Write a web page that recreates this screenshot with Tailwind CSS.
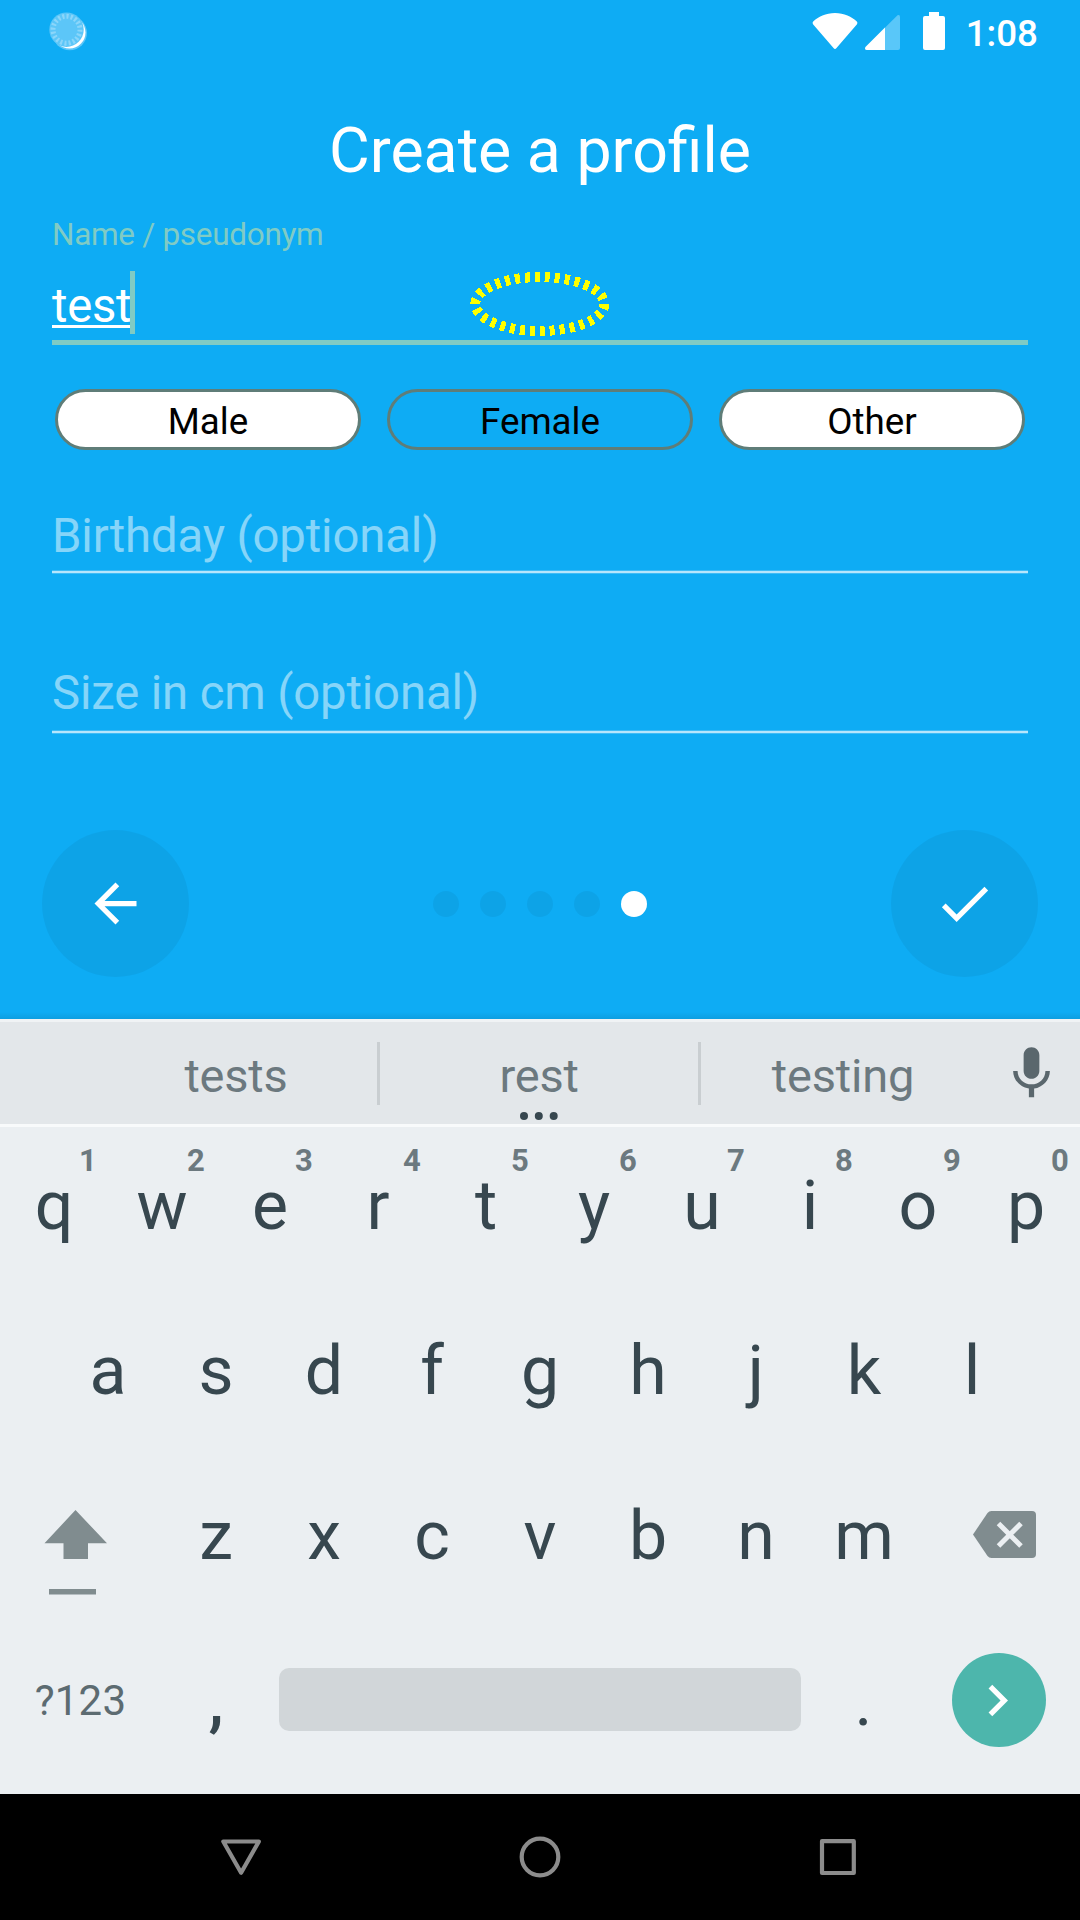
<!DOCTYPE html>
<html lang="en">
<head>
<meta charset="utf-8">
<title>Create a profile</title>
<script src="https://cdn.jsdelivr.net/npm/@tailwindcss/browser@4"></script>
</head>
<body class="w-[1080px] h-[1920px] overflow-hidden bg-[#0eacf4] font-[Roboto,sans-serif] flex flex-col">

<!-- status bar -->
<header class="h-[63px] shrink-0 flex items-start justify-between pl-[48px] pr-[42px] pt-[11px] text-white">
  <svg class="w-10 h-10" viewBox="0 0 40 40">
    <circle cx="21.700" cy="22" r="17.300" fill="#5cc6f8"/>
    <circle cx="21.500" cy="21.500" r="16" fill="#fff"/>
    <circle cx="18.500" cy="18.700" r="17.200" fill="#5cc6f8"/>
    <circle cx="18.500" cy="18.700" r="13.500" fill="none" stroke="#8bd6fa" stroke-width="5" stroke-dasharray="2 2" pathLength="80"/>
  </svg>
  <div class="flex">
    <svg class="w-[160px] h-10" viewBox="810 11 160 40" fill="#fff">
      <path d="M813.2 21.500C818 17 826 13 835 13s17 4 21.800 8.500q1.200 1.200.2 2.800L836.500 48q-1.500 1.800-3 0L813 24.300q-1-1.600.2-2.800z"/>
      <path d="M897.500 15.300q2.500-1 2.500 1.700v31q0 2-2 2H867q-3-.5-1.500-3z" fill="#59c7f9"/>
      <path d="M885 27.500V50H867q-3-.5-1.500-3z"/>
      <path d="M929 12h10v4h4q2 0 2 2v30q0 2-2 2h-18q-2 0-2-2V18q0-2 2-2h4z"/>
    </svg>
    <div class="-ml-1 mt-px text-[36.750px] leading-[43px] font-medium">1:08</div>
  </div>
</header>

<main class="h-[956px] shrink-0 px-[52px] flex flex-col">
  <h1 class="mt-[50px] text-[62.600px] leading-[75px] text-white text-center">Create a profile</h1>
  <label class="mt-[29px] text-[31.500px] leading-[36px] tracking-[-0.3px] text-[#80cbc4]">Name / pseudonym</label>
  <div class="relative -mt-px h-[93px] pt-[21px] flex items-start border-b-[5px] border-[#80cbc4] text-[47.250px] leading-[66px] text-white">
    <span class="tracking-[-0.3px] underline decoration-[3px] underline-offset-[3px] [text-decoration-skip-ink:none]">test</span>
    <span class="w-[5px] h-[63px] -mt-[2px] -ml-[1px] bg-[#80cbc4]"></span>
    <!-- touch indicator -->
    <svg class="absolute left-[416px] top-[18px] w-[144px] h-[68px]" viewBox="0 0 144 68"><ellipse cx="71.800" cy="34" rx="64.500" ry="27" fill="none" stroke="#ff0" stroke-width="10" stroke-dasharray="5 5" pathLength="300" shape-rendering="crispEdges"/></svg>
  </div>
  <div class="mt-[44px] mx-[3px] grid grid-cols-3 gap-[26px] text-center text-[36.750px] text-black">
    <button class="h-[61px] rounded-full border-[3px] border-[#5f7d78] bg-white"><span class="block leading-[59px]">Male</span></button>
    <button class="h-[61px] rounded-full border-[3px] border-[#5f7d78]"><span class="block leading-[59px]">Female</span></button>
    <button class="h-[61px] rounded-full border-[3px] border-[#5f7d78] bg-white"><span class="block leading-[59px]">Other</span></button>
  </div>
  <div class="h-[124px] pt-[56px] flex flex-col justify-between text-[47.250px] leading-[61px] tracking-[-0.13px] text-white/50">
    <span>Birthday (optional)</span>
    <span class="h-1 border-y border-white/20 bg-[#b7e6fc] bg-clip-padding"></span>
  </div>
  <div class="h-[160px] pt-[89px] flex flex-col justify-between text-[47.250px] leading-[61px] tracking-[-0.13px] text-white/50">
    <span>Size in cm (optional)</span>
    <span class="h-1 border-y border-white/20 bg-[#b7e6fc] bg-clip-padding"></span>
  </div>
  <nav class="mt-[96px] -mx-[10px] flex items-center justify-between">
    <button class="size-[147px] rounded-full bg-black/5 flex items-center justify-center">
      <svg class="size-[63px]" viewBox="0 0 24 24" fill="#fff"><path d="M20 11H7.830l5.590-5.590L12 4l-8 8 8 8 1.410-1.410L7.830 13H20v-2z"/></svg>
    </button>
    <div class="flex gap-[21px] pt-px">
      <i class="size-[26px] rounded-full bg-black/5"></i>
      <i class="size-[26px] rounded-full bg-black/5"></i>
      <i class="size-[26px] rounded-full bg-black/5"></i>
      <i class="size-[26px] rounded-full bg-black/5"></i>
      <i class="size-[26px] rounded-full bg-white"></i>
    </div>
    <button class="size-[147px] rounded-full bg-black/5 flex items-center justify-center">
      <svg class="size-[63px]" viewBox="0 0 24 24" fill="#fff"><path d="M9 16.200L4.800 12l-1.400 1.400L9 19 21 7l-1.400-1.400z"/></svg>
    </button>
  </nav>
  <div class="mt-auto -mx-[52px] h-[7px] bg-linear-to-b from-transparent to-black/8"></div>
</main>

<!-- keyboard -->
<section class="h-[775px] shrink-0 bg-[#ebeff2] text-[#37474f]">
  <div class="h-[108px] border-t-[3px] border-b-[3px] border-t-[#f0f3f5] border-b-[#f8fafb] bg-[#e3e7ea] flex text-[47px] tracking-[-0.2px] text-[#6c797f] text-center">
    <div class="w-[94px]"></div>
    <div class="w-[284px] leading-[108px]">tests</div>
    <div class="w-[3px] h-[63px] mt-5 -ml-px bg-[#c9ced1]"></div>
    <div class="relative w-[318px] leading-[108px]">rest
      <svg class="absolute left-[139px] top-[90px] w-10 h-2" viewBox="0 0 40 8" fill="#37474f"><circle cx="5" cy="4" r="4"/><circle cx="19.800" cy="4" r="4"/><circle cx="34.700" cy="4" r="4"/></svg>
    </div>
    <div class="w-[3px] h-[63px] mt-5 bg-[#c9ced1]"></div>
    <div class="w-[284px] leading-[108px]">testing</div>
    <svg class="ml-[15px] mt-5 size-[63px]" viewBox="0 0 24 24" fill="#5a676d"><path d="M12 14c1.660 0 2.990-1.340 2.990-3L15 5c0-1.660-1.340-3-3-3S9 3.340 9 5v6c0 1.660 1.340 3 3 3zm5.300-3c0 3-2.540 5.100-5.300 5.100S6.700 14 6.700 11H5c0 3.410 2.720 6.230 6 6.720V21h2v-3.280c3.280-.480 6-3.300 6-6.720h-1.700z"/></svg>
  </div>

  <div class="h-[165px] pt-[39px] grid grid-cols-10 text-center text-[68px] leading-[80px]">
    <div class="relative">q<sup class="absolute left-[68px] -top-[25px] w-10 text-[31px] leading-[40px] font-bold text-[#6c797f]">1</sup></div>
    <div class="relative">w<sup class="absolute left-[68px] -top-[25px] w-10 text-[31px] leading-[40px] font-bold text-[#6c797f]">2</sup></div>
    <div class="relative">e<sup class="absolute left-[68px] -top-[25px] w-10 text-[31px] leading-[40px] font-bold text-[#6c797f]">3</sup></div>
    <div class="relative">r<sup class="absolute left-[68px] -top-[25px] w-10 text-[31px] leading-[40px] font-bold text-[#6c797f]">4</sup></div>
    <div class="relative">t<sup class="absolute left-[68px] -top-[25px] w-10 text-[31px] leading-[40px] font-bold text-[#6c797f]">5</sup></div>
    <div class="relative">y<sup class="absolute left-[68px] -top-[25px] w-10 text-[31px] leading-[40px] font-bold text-[#6c797f]">6</sup></div>
    <div class="relative">u<sup class="absolute left-[68px] -top-[25px] w-10 text-[31px] leading-[40px] font-bold text-[#6c797f]">7</sup></div>
    <div class="relative">i<sup class="absolute left-[68px] -top-[25px] w-10 text-[31px] leading-[40px] font-bold text-[#6c797f]">8</sup></div>
    <div class="relative">o<sup class="absolute left-[68px] -top-[25px] w-10 text-[31px] leading-[40px] font-bold text-[#6c797f]">9</sup></div>
    <div class="relative">p<sup class="absolute left-[68px] -top-[25px] w-10 text-[31px] leading-[40px] font-bold text-[#6c797f]">0</sup></div>
  </div>

  <div class="h-[165px] pt-[39px] px-[54px] grid grid-cols-9 text-center text-[68px] leading-[80px]">
    <div>a</div><div>s</div><div>d</div><div>f</div><div>g</div><div>h</div><div>j</div><div>k</div><div>l</div>
  </div>

  <div class="h-[165px] pt-[39px] flex text-center text-[68px] leading-[80px]">
    <svg class="w-[162px] h-[120px]" viewBox="0 1496 162 120" fill="#808c8f"><path d="M75.500 1510L107 1543.300H88V1559H63.500V1543.300H44.500zM49 1589h47v5.500H49z"/></svg>
    <div class="w-[108px]">z</div><div class="w-[108px]">x</div><div class="w-[108px]">c</div><div class="w-[108px]">v</div><div class="w-[108px]">b</div><div class="w-[108px]">n</div><div class="w-[108px]">m</div>
    <svg class="w-[162px] h-[120px]" viewBox="918 1496 162 120"><path d="M973 1534.500L987.500 1513q1.500-2 4-2H1032q4 0 4 4v39q0 4-4 4H991.500q-2.500 0-4-2z" fill="#808c8f"/><path d="M998.500 1523.500l22.500 22.500M1021 1523.500L998.500 1546" stroke="#ebeff2" stroke-width="5"/></svg>
  </div>

  <div class="h-[172px] flex text-center">
    <div class="w-[161px] text-[42px] leading-[50px] tracking-[0.2px] pt-[54px] text-[#5c6b71]">?123</div>
    <div class="w-[110px] text-[68px] leading-[80px] pt-[39px] font-medium">,</div>
    <div class="w-[522px] h-[63px] mt-[46px] mx-[8px] rounded-[10px] bg-[#d1d6d9]"></div>
    <div class="w-[109px] text-[68px] leading-[80px] pt-[40px]">.</div>
    <div class="size-[94px] mt-[31px] ml-[34px] rounded-full bg-[#4db6ac] flex items-center justify-center">
      <svg class="size-[63px] -ml-[4px]" viewBox="0 0 24 24" fill="#fff"><path d="M10 6L8.590 7.410 13.170 12l-4.580 4.590L10 18l6-6z"/></svg>
    </div>
  </div>
</section>

<!-- navigation bar -->
<footer class="h-[126px] shrink-0 bg-black">
  <svg class="w-full h-full" viewBox="0 1794 1080 126" fill="none" stroke="#8c8c8c" stroke-width="4.200" stroke-linejoin="round"><path d="M223.300 1841.500h35.600L241.100 1872.700z"/><circle cx="540" cy="1857" r="18.300"/><rect x="822" y="1841.200" width="31.800" height="31.800"/></svg>
</footer>
</body>
</html>
